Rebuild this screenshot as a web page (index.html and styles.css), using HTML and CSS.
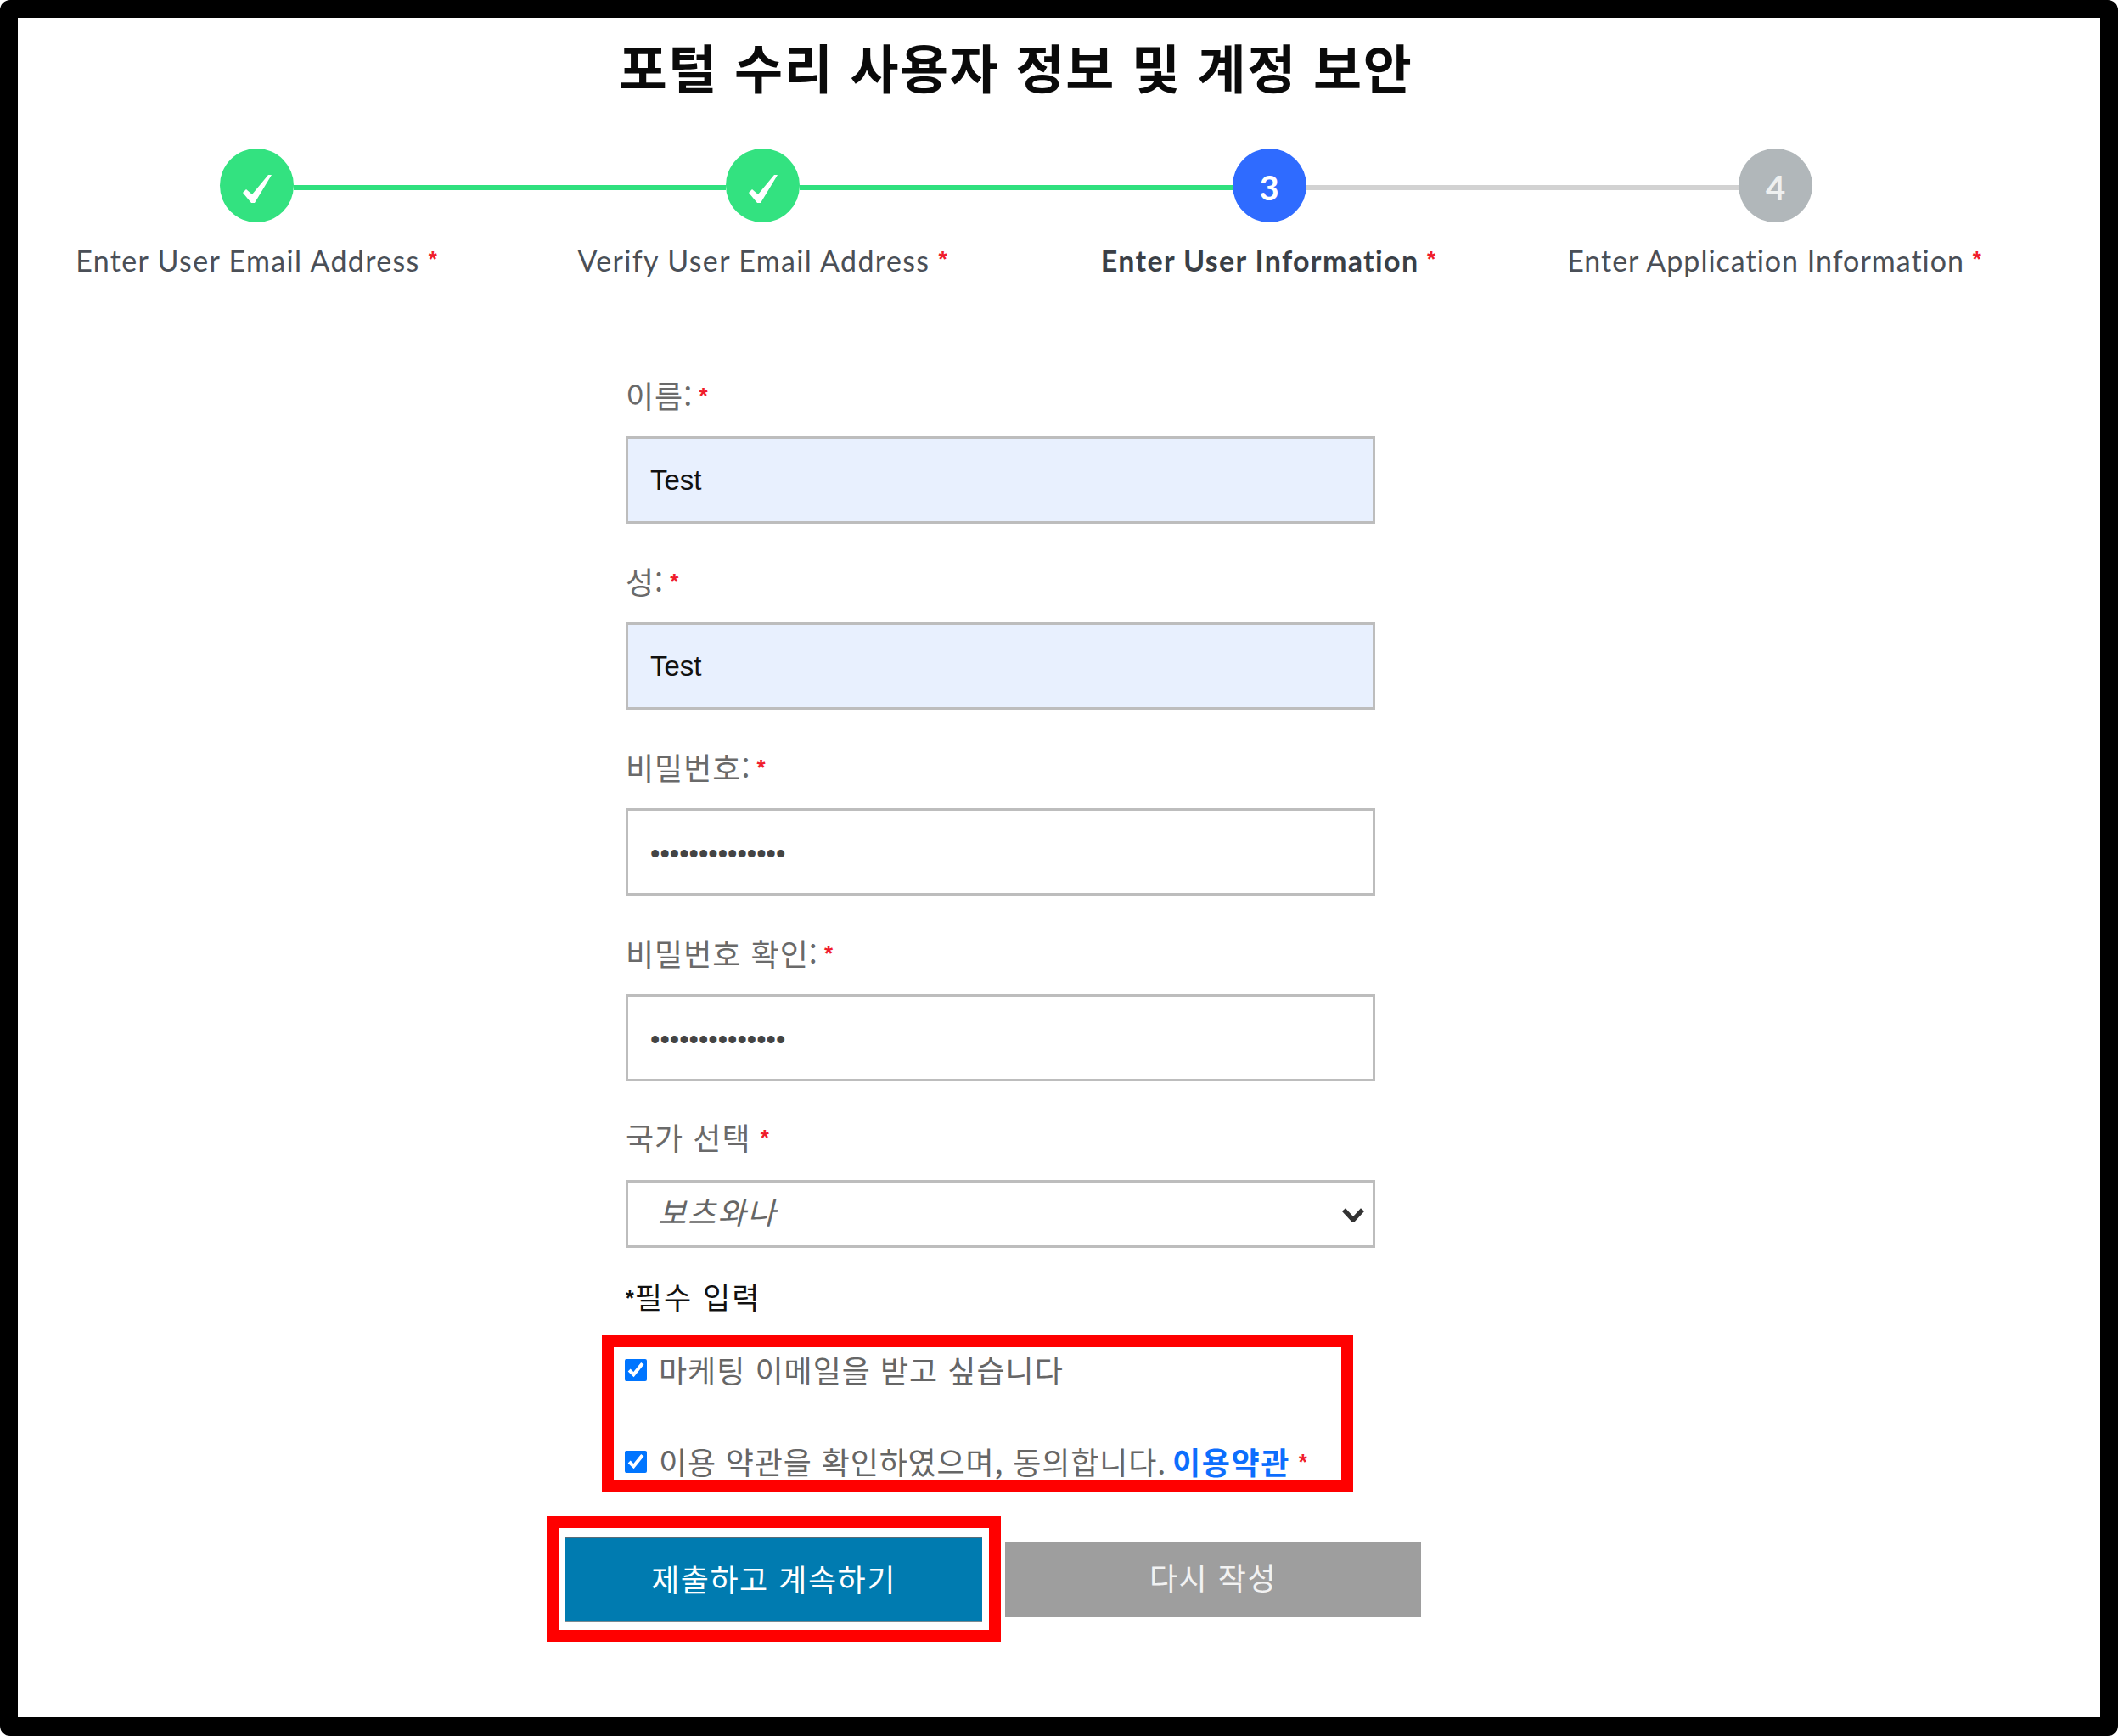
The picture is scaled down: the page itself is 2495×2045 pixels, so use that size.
FILE: index.html
```html
<!DOCTYPE html>
<html lang="ko">
<head>
<meta charset="utf-8">
<title>포털 수리 사용자 정보 및 계정 보안</title>
<link rel="stylesheet" href="styles.css">
</head>
<body>
<main class="frame">
  <h1 class="title">포털 수리 사용자 정보 및 계정 보안</h1>

  <div class="track">
    <span class="dot dot-done">
      <svg class="check" viewBox="0 0 36 36"><path d="M1 23 L5 19 L12 25 L31 2 L35 2 L15 35 L11 35 Z"/></svg>
    </span>
    <span class="line line-done"></span>
    <span class="dot dot-done">
      <svg class="check" viewBox="0 0 36 36"><path d="M1 23 L5 19 L12 25 L31 2 L35 2 L15 35 L11 35 Z"/></svg>
    </span>
    <span class="line line-done"></span>
    <span class="dot dot-active">3</span>
    <span class="line"></span>
    <span class="dot dot-todo">4</span>
  </div>
  <div class="step-labels">
    <div class="step-label">Enter User Email Address <sup class="star">*</sup></div>
    <div class="step-label">Verify User Email Address <sup class="star">*</sup></div>
    <div class="step-label step-label-active">Enter User Information <sup class="star">*</sup></div>
    <div class="step-label">Enter Application Information <sup class="star">*</sup></div>
  </div>

  <form class="form">
    <div class="field">
      <label class="label">이름: <sup class="star">*</sup></label>
      <input class="input input-filled" type="text" value="Test">
    </div>
    <div class="field">
      <label class="label">성: <sup class="star">*</sup></label>
      <input class="input input-filled" type="text" value="Test">
    </div>
    <div class="field">
      <label class="label">비밀번호: <sup class="star">*</sup></label>
      <input class="input input-secret" type="password" value="aaaaaaaaaaaaaa">
    </div>
    <div class="field">
      <label class="label">비밀번호 확인: <sup class="star">*</sup></label>
      <input class="input input-secret" type="password" value="aaaaaaaaaaaaaa">
    </div>
    <div class="field field-select">
      <label class="label">국가 선택 <sup class="star">*</sup></label>
      <div class="select-wrap">
        <select class="select"><option>보츠와나</option></select>
        <svg class="chevron" viewBox="0 0 26 18"><path d="M2 3 L13 15 L24 3"/></svg>
      </div>
    </div>
    <p class="note"><span class="note-star">*</span>필수 입력</p>

    <div class="highlight highlight-checks">
      <label class="check-row"><input class="checkbox" type="checkbox" checked><span class="check-text">마케팅 이메일을 받고 싶습니다</span></label>
      <label class="check-row"><input class="checkbox" type="checkbox" checked><span class="check-text check-text-terms">이용 약관을 확인하였으며, 동의합니다. <a class="link" href="#">이용약관</a> <sup class="star">*</sup></span></label>
    </div>

    <div class="actions">
      <div class="highlight highlight-button">
        <button class="btn btn-primary" type="button">제출하고 계속하기</button>
      </div>
      <button class="btn btn-reset" type="button">다시 작성</button>
    </div>
  </form>
</main>
</body>
</html>
```
FILE: styles.css
```css
* { box-sizing: border-box; }
html, body { margin: 0; padding: 0; background: #fff; }
body { font-family: "Noto Sans CJK KR", "Liberation Sans", sans-serif; }

.frame {
  width: 2495px;
  height: 2045px;
  border: 21px solid #000;
  border-bottom-width: 22px;
  border-radius: 12px;
  background: #fff;
  overflow: hidden;
}

.title {
  margin: 17px 102px 0 0;
  height: 80px;
  font-size: 62px;
  line-height: 80px;
  font-weight: 700;
  text-align: center;
  color: #0a0a0a;
  letter-spacing: 1.65px;
}

.track {
  display: flex;
  align-items: center;
  margin: 57px 0 0 238px;
  width: 1876px;
  height: 87px;
}
.dot {
  flex: none;
  width: 87px;
  height: 87px;
  padding-top: 4px;
  border-radius: 50%;
  display: flex;
  align-items: center;
  justify-content: center;
  color: #fff;
  font: 700 40px "Lato", "Liberation Sans", sans-serif;
}
.dot-done { background: #33e280; padding-top: 6px; }
.dot-active { background: #2f6bff; }
.dot-todo { background: #b1b7ba; color: #eef0f0; }
.check { width: 36px; height: 36px; }
.check path { fill: #fff; }
.line {
  flex: 1;
  height: 6px;
  margin-top: 5px;
  background: #d2d2d2;
}
.line-done { background: #2fe07e; }

.step-labels {
  display: grid;
  grid-template-columns: repeat(4, 596px);
  margin: 20px 0 0 -17px;
}
.step-label {
  text-align: center;
  font: 400 34px/50px "Lato", "Liberation Sans", sans-serif;
  letter-spacing: 1.35px;
  color: #4a4f57;
  white-space: nowrap;
}
.step-label:last-child { letter-spacing: 1px; }
.step-label-active { font-weight: 700; color: #3a3f46; }

.star {
  color: #f01c2c;
  font: 700 26px/1 "Liberation Sans", sans-serif;
  vertical-align: 6px;
  letter-spacing: 0;
}

.form {
  margin: 108px 0 0 623px;
  width: 1030px;
}
.field {
  margin: 0 0 42px 93px;
  width: 883px;
}
.field-select { margin: -2px 0 33px 93px; }
.field-select .label { margin-bottom: 26px; }
.label {
  display: block;
  height: 50px;
  margin-bottom: 24px;
  font-size: 36px;
  line-height: 50px;
  color: #6a6a6a;
  letter-spacing: 1px;
}
.label .star { margin-left: -4px; }
.field-select .label .star { margin-left: 0; }
.input {
  display: block;
  width: 883px;
  height: 103px;
  padding: 0 0 0 26px;
  border: 3px solid #bdbdbd;
  border-radius: 0;
  background: #fff;
  outline: none;
  font: 400 33px "Liberation Sans", sans-serif;
  color: #444;
}
.input-filled { background: #e8f0fe; color: #111; }
.input-secret { padding-top: 5px; font-size: 32.5px; }

.select-wrap { position: relative; width: 883px; }
.select {
  display: block;
  width: 883px;
  height: 80px;
  padding: 0 0 8px 35px;
  border: 3px solid #bdbdbd;
  border-radius: 0;
  background: #fff;
  appearance: none;
  font-family: "Noto Sans CJK KR", sans-serif;
  font-size: 36px;
  font-style: italic;
  color: #666;
  letter-spacing: 2px;
}
.chevron {
  position: absolute;
  right: 13px;
  top: 32px;
  width: 26px;
  height: 18px;
  fill: none;
  stroke: #333;
  stroke-width: 5.5;
}

.note {
  margin: 0 0 20px 93px;
  height: 50px;
  font-size: 35px;
  line-height: 48px;
  color: #111;
  letter-spacing: 2px;
}
.note-star {
  font: 700 25px "Liberation Sans", sans-serif;
  vertical-align: 4px;
  letter-spacing: 1px;
}

.highlight { border: 14px solid #f00; }
.highlight-checks {
  margin-left: 65px;
  width: 885px;
  height: 185px;
  padding: 5px 0 0 13px;
}
.check-row {
  display: flex;
  align-items: center;
  height: 44px;
  margin-bottom: 64px;
  font-size: 36px;
  color: #666;
  letter-spacing: 1px;
  white-space: nowrap;
}
.check-text { margin-bottom: 2px; }
.check-text-terms { letter-spacing: 0.85px; }
.checkbox {
  flex: none;
  width: 26px;
  height: 26px;
  margin: 0 14px 0 0;
  accent-color: #0075ff;
}
.link {
  color: #0d6efd;
  font-weight: 700;
  text-decoration: none;
  letter-spacing: 1.6px;
  margin-left: -4px;
}
.check-text .star { margin-left: -1px; }

.actions {
  display: flex;
  align-items: center;
  margin-top: 28px;
}
.highlight-button {
  width: 535px;
  height: 148px;
  padding: 10px 0 0 8px;
}
.btn {
  display: block;
  border: 0;
  border-radius: 0;
  font-family: "Noto Sans CJK KR", sans-serif;
  font-size: 36px;
  letter-spacing: 1.5px;
}
.btn-primary {
  width: 491px;
  height: 101px;
  padding: 0 0 3px;
  background: #007bb0;
  border-top: 2px solid #5a6d78;
  border-bottom: 2px solid #7a8a92;
  color: #fff;
}
.btn-reset {
  width: 490px;
  height: 89px;
  margin-left: 5px;
  padding: 0 0 7px;
  background: #9e9e9e;
  color: #f2f2f2;
}
```
